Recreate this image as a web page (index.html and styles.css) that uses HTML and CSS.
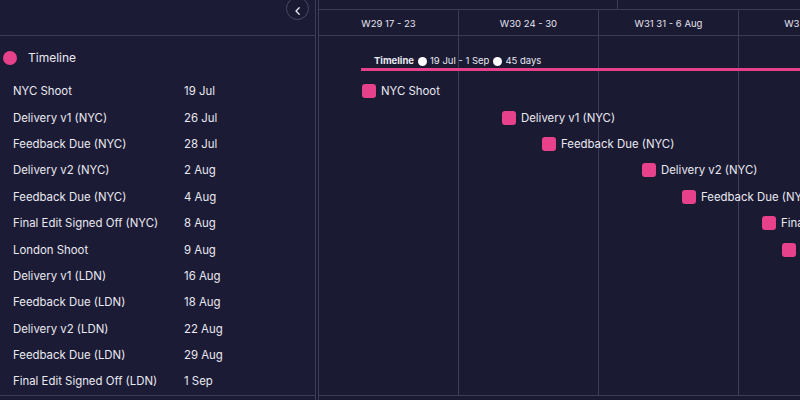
FILE: index.html
```html
<!DOCTYPE html>
<html>
<head>
<meta charset="utf-8">
<link rel="stylesheet" href="styles.css">
</head>
<body>
<div class="app">
  <aside class="side">
    <div class="side-head"></div>
    <div class="group"><span class="dot"></span><span>Timeline</span></div>
    <ul class="rows">
      <li><span>NYC Shoot</span><span>19 Jul</span></li>
      <li><span>Delivery v1 (NYC)</span><span>26 Jul</span></li>
      <li><span>Feedback Due (NYC)</span><span>28 Jul</span></li>
      <li><span>Delivery v2 (NYC)</span><span>2 Aug</span></li>
      <li><span>Feedback Due (NYC)</span><span>4 Aug</span></li>
      <li><span>Final Edit Signed Off (NYC)</span><span>8 Aug</span></li>
      <li><span>London Shoot</span><span>9 Aug</span></li>
      <li><span>Delivery v1 (LDN)</span><span>16 Aug</span></li>
      <li><span>Feedback Due (LDN)</span><span>18 Aug</span></li>
      <li><span>Delivery v2 (LDN)</span><span>22 Aug</span></li>
      <li><span>Feedback Due (LDN)</span><span>29 Aug</span></li>
      <li><span>Final Edit Signed Off (LDN)</span><span>1 Sep</span></li>
    </ul>
  </aside>
  <button class="collapse" aria-label="Collapse">
    <svg width="10" height="10" viewBox="0 0 10 10"><path d="M6.2 1.8 3 5l3.2 3.2" fill="none" stroke="#e8e8f0" stroke-width="1.3" stroke-linecap="round" stroke-linejoin="round"/></svg>
  </button>
  <div class="spacer"></div>
  <section class="chart">
    <div class="months">
      <div class="month m1"><span>Jul</span></div>
      <div class="month m2"></div>
    </div>
    <div class="weeks">
      <div class="week">W29 17 - 23</div>
      <div class="week">W30 24 - 30</div>
      <div class="week">W31 31 - 6 Aug</div>
      <div class="week">W32 7 - 13</div>
    </div>
    <div class="body">
      <div class="tl" style="padding-left:42px">
        <div class="tl-label"><b>Timeline</b><i class="wdot"></i>19 Jul - 1 Sep<i class="wdot"></i>45 days</div>
        <div class="tl-bar"></div>
      </div>
      <div class="ms" style="padding-left:43px"><i class="mk"></i>NYC Shoot</div>
      <div class="ms" style="padding-left:183px"><i class="mk"></i>Delivery v1 (NYC)</div>
      <div class="ms" style="padding-left:223px"><i class="mk"></i>Feedback Due (NYC)</div>
      <div class="ms" style="padding-left:323px"><i class="mk"></i>Delivery v2 (NYC)</div>
      <div class="ms" style="padding-left:363px"><i class="mk"></i>Feedback Due (NYC)</div>
      <div class="ms" style="padding-left:443px"><i class="mk"></i>Final Edit Signed Off (NYC)</div>
      <div class="ms" style="padding-left:463px"><i class="mk"></i>London Shoot</div>
      <div class="ms" style="padding-left:603px"><i class="mk"></i>Delivery v1 (LDN)</div>
      <div class="ms" style="padding-left:643px"><i class="mk"></i>Feedback Due (LDN)</div>
      <div class="ms" style="padding-left:723px"><i class="mk"></i>Delivery v2 (LDN)</div>
      <div class="ms" style="padding-left:863px"><i class="mk"></i>Feedback Due (LDN)</div>
      <div class="ms" style="padding-left:923px"><i class="mk"></i>Final Edit Signed Off (LDN)</div>
    </div>
  </section>
</div>
</body>
</html>
```
FILE: styles.css
```css
* { box-sizing: border-box; }
html, body {
  margin: 0;
  padding: 0;
  background: #1b1a33;
  width: 800px;
  height: 400px;
  overflow: hidden;
  font-family: Inter, "Liberation Sans", sans-serif;
  color: #e9e9f1;
}
.app {
  position: relative;
  display: flex;
  width: 800px;
  height: 400px;
  overflow: hidden;
}
.side {
  width: 316px;
  flex: none;
  border-right: 1px solid #3d3c58;
  background: #1c1b35;
}
.side-head {
  height: 36px;
  border-bottom: 1px solid #3d3c58;
}
.group {
  height: 42px;
  display: flex;
  align-items: center;
  padding: 1px 0 0 3px;
  gap: 11px;
  font-size: 12px;
}
.dot {
  width: 14px;
  height: 14px;
  border-radius: 50%;
  background: #e8418b;
}
.rows {
  list-style: none;
  margin: 0;
  padding: 0;
  border-bottom: 1px solid #3d3c58;
}
.rows li {
  height: 26.4px;
  display: grid;
  grid-template-columns: 171px 1fr;
  align-items: center;
  padding-left: 13px;
  font-size: 11.4px;
  white-space: nowrap;
}
.collapse {
  position: absolute;
  left: 286px;
  top: -3px;
  width: 23px;
  height: 23px;
  border-radius: 50%;
  border: 1px solid #4a4966;
  background: #1b1a33;
  padding: 0;
  display: flex;
  align-items: center;
  justify-content: center;
}
.collapse svg { display: block; margin-top: 4px; }
.spacer { width: 2px; flex: none; }
.chart {
  flex: 1;
  border-left: 1px solid #3d3c58;
  min-width: 0;
}
.months {
  display: flex;
  height: 10px;
  border-bottom: 1px solid #3d3c58;
}
.month {
  overflow: hidden;
  font-size: 10px;
  color: #8f8ea8;
  padding-left: 1px;
}
.month span { display: block; margin-top: -10px; line-height: 12px; }
.m1 { width: 299px; border-right: 1px solid #3d3c58; flex: none; }
.m2 { flex: 1; }
.weeks {
  display: flex;
  height: 26px;
  border-bottom: 1px solid #3d3c58;
}
.week {
  width: 140px;
  flex: none;
  border-right: 1px solid #3d3c58;
  display: flex;
  align-items: center;
  justify-content: center;
  font-size: 9.5px;
  color: #e4e4ee;
  white-space: nowrap;
  padding-top: 1px;
}
.body {
  background-image: repeating-linear-gradient(to right, transparent 0 139px, #3f3e5a 139px 140px);
  border-bottom: 1px solid #3d3c58;
  white-space: nowrap;
}
.tl {
  height: 42px;
  padding-top: 18px;
}
.tl-label {
  height: 14px;
  line-height: 14px;
  font-size: 9.5px;
  padding-left: 13px;
  display: flex;
  align-items: center;
}
.tl-label b { font-weight: 700; }
.wdot {
  display: inline-block;
  width: 9px;
  height: 9px;
  border-radius: 50%;
  background: #fff;
  margin: 0 3px 0 4px;
}
.tl-bar {
  height: 3px;
  background: #e8418b;
}
.ms {
  height: 26.4px;
  display: flex;
  align-items: center;
  font-size: 11.4px;
}
.mk {
  width: 14px;
  height: 14px;
  border-radius: 3px;
  background: #e8418b;
  margin-right: 5px;
  flex: none;
}
```
